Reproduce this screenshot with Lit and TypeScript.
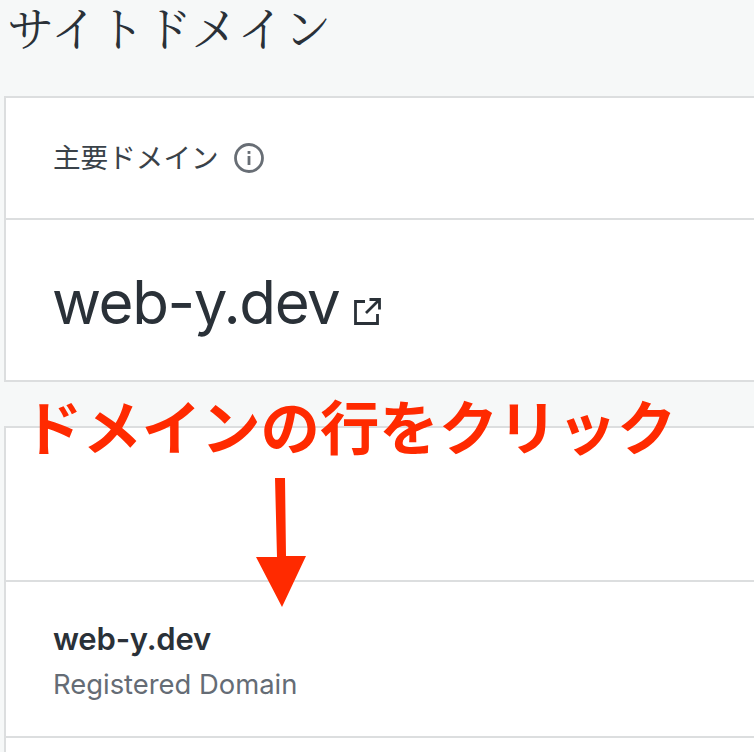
import { LitElement, html, css } from "lit";
import { customElement } from "lit/decorators.js";

@customElement("app-root")
export class AppRoot extends LitElement {
  static styles = css`
    :host {
      display: block;
      position: relative;
      width: 754px;
      height: 752px;
      overflow: hidden;
      background: #f6f8f8;
      color: #2a3138;
      font-family: Inter, "Noto Sans CJK JP", sans-serif;
    }
    .page {
      padding-left: 4px;
      display: flex;
      flex-direction: column;
    }
    h1 {
      margin: 0;
      height: 96px;
      box-sizing: border-box;
      padding: 0 0 0 3px;
      font-family: "Noto Serif CJK JP", "Liberation Serif", "Noto Sans CJK JP", serif;
      font-size: 47px;
      line-height: 52px;
      font-weight: 400;
      white-space: nowrap;
    }
    .card {
      background: #fff;
      border: solid #dcdedf;
      border-width: 2px 0 2px 2px;
    }
    .row + .row {
      border-top: 2px solid #dcdedf;
    }
    .head {
      height: 120px;
      display: flex;
      align-items: center;
      gap: 14px;
      padding-left: 47px;
      font-size: 27.6px;
      font-family: "Noto Sans CJK JP", sans-serif;
      color: #3a4249;
    }
    .head span { margin-top: -5px; }
    .domain {
      height: 160px;
      display: flex;
      align-items: center;
      padding-left: 46px;
      gap: 14px;
    }
    .domain a {
      margin-top: 4px;
      font-size: 60px;
      line-height: 70px;
      color: #2a3138;
      letter-spacing: -1.4px;
    }
    .domain svg { margin-top: 24px; }
    .second { margin-top: 44px; }
    .blank { height: 152px; }
    .item {
      height: 156px;
      padding: 39px 0 0 47px;
      box-sizing: border-box;
    }
    .name {
      font-size: 31px;
      line-height: 36px;
      font-weight: 600;
      letter-spacing: -0.2px;
    }
    .sub {
      margin-top: 10px;
      font-size: 27.4px;
      line-height: 34px;
      color: #656c75;
    }
    .tail { height: 40px; }
    .note {
      position: absolute;
      left: 23px;
      top: 390px;
      font-family: "Noto Sans CJK JP", sans-serif;
      font-size: 59.4px;
      line-height: 68px;
      font-weight: 700;
      color: #ff2a00;
      white-space: nowrap;
    }
    .arrow {
      position: absolute;
      left: 250px;
      top: 475px;
    }
  `;

  render() {
    return html`
      <div class="page">
        <h1>サイトドメイン</h1>
        <section class="card">
          <div class="row head">
            <span>主要ドメイン</span>
            <svg width="32" height="32" viewBox="0 0 32 32" fill="none">
              <circle cx="16" cy="16" r="13.5" stroke="#686e75" stroke-width="2.8"></circle>
              <rect x="14.6" y="14" width="2.8" height="9" fill="#686e75"></rect>
              <rect x="14.6" y="9" width="2.8" height="2.9" fill="#686e75"></rect>
            </svg>
          </div>
          <div class="row domain">
            <a>web-y.dev</a>
            <svg width="28" height="28" viewBox="0 0 28 28" fill="none" stroke="#2a3138" stroke-width="2.8">
              <path d="M12 3.5H2.5V25.5H24.5V16"></path>
              <path d="M13 15L26 2M16.5 1.5H26.5V11.5"></path>
            </svg>
          </div>
        </section>
        <section class="card second">
          <div class="row blank"></div>
          <div class="row item">
            <div class="name">web-y.dev</div>
            <div class="sub">Registered Domain</div>
          </div>
          <div class="row tail"></div>
        </section>
      </div>
      <div class="note">ドメインの行をクリック</div>
      <svg class="arrow" width="60" height="135" viewBox="0 0 60 135">
        <path d="M25 3L35 3L36 81L56 81L32 132L6 82L27 82Z" fill="#ff2a00"></path>
      </svg>
    `;
  }
}
